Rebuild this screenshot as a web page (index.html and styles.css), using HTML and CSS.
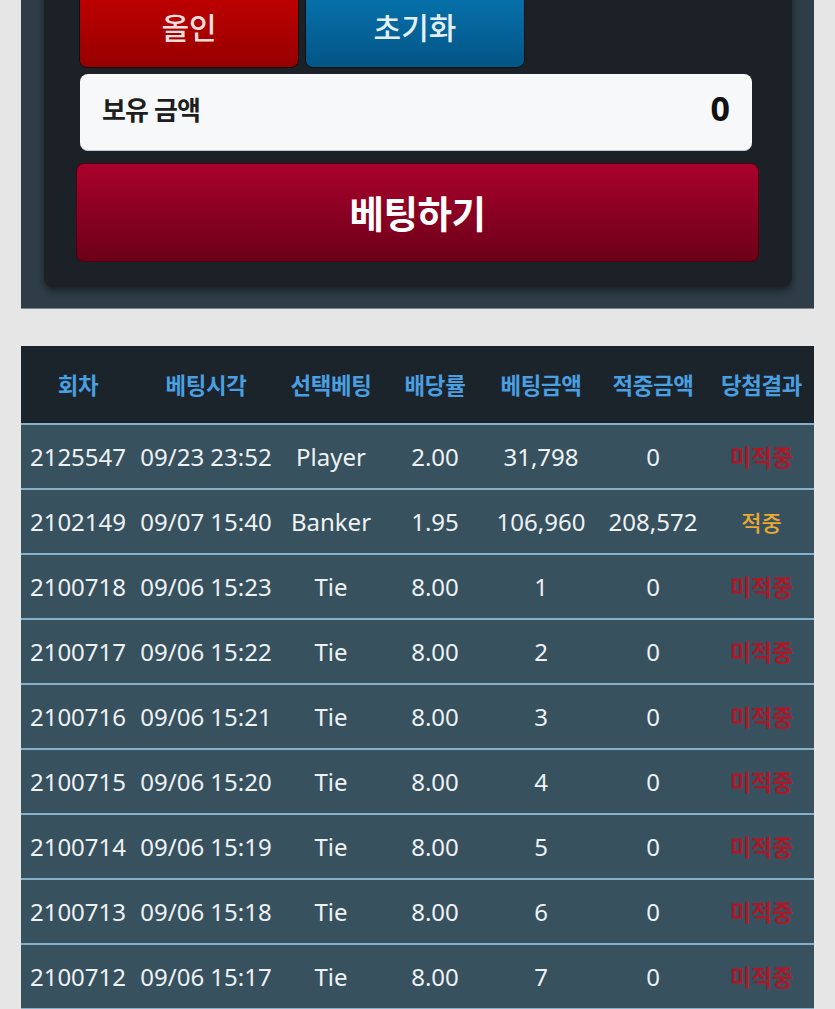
FILE: index.html
```html
<!DOCTYPE html>
<html lang="ko">
<head>
<meta charset="utf-8">
<title>베팅</title>
<link rel="stylesheet" href="styles.css">
</head>
<body>
<section class="panel">
  <div class="card">
    <div class="btn-row">
      <button class="chip chip-red">올인</button>
      <button class="chip chip-blue">초기화</button>
    </div>
    <div class="balance">
      <span class="balance-label">보유 금액</span>
      <span class="balance-value">0</span>
    </div>
    <button class="bet-btn">베팅하기</button>
  </div>
</section>

<table class="history">
  <colgroup>
    <col class="c1"><col class="c2"><col class="c3"><col class="c4"><col class="c5"><col class="c6"><col class="c7">
  </colgroup>
  <thead>
    <tr>
      <th>회차</th><th>베팅시각</th><th>선택베팅</th><th>배당률</th><th>베팅금액</th><th>적중금액</th><th>당첨결과</th>
    </tr>
  </thead>
  <tbody>
    <tr><td>2125547</td><td>09/23 23:52</td><td>Player</td><td>2.00</td><td>31,798</td><td>0</td><td class="lose">미적중</td></tr>
    <tr><td>2102149</td><td>09/07 15:40</td><td>Banker</td><td>1.95</td><td>106,960</td><td>208,572</td><td class="win">적중</td></tr>
    <tr><td>2100718</td><td>09/06 15:23</td><td>Tie</td><td>8.00</td><td>1</td><td>0</td><td class="lose">미적중</td></tr>
    <tr><td>2100717</td><td>09/06 15:22</td><td>Tie</td><td>8.00</td><td>2</td><td>0</td><td class="lose">미적중</td></tr>
    <tr><td>2100716</td><td>09/06 15:21</td><td>Tie</td><td>8.00</td><td>3</td><td>0</td><td class="lose">미적중</td></tr>
    <tr><td>2100715</td><td>09/06 15:20</td><td>Tie</td><td>8.00</td><td>4</td><td>0</td><td class="lose">미적중</td></tr>
    <tr><td>2100714</td><td>09/06 15:19</td><td>Tie</td><td>8.00</td><td>5</td><td>0</td><td class="lose">미적중</td></tr>
    <tr><td>2100713</td><td>09/06 15:18</td><td>Tie</td><td>8.00</td><td>6</td><td>0</td><td class="lose">미적중</td></tr>
    <tr><td>2100712</td><td>09/06 15:17</td><td>Tie</td><td>8.00</td><td>7</td><td>0</td><td class="lose">미적중</td></tr>
  </tbody>
</table>
</body>
</html>
```

FILE: styles.css
```css
* { box-sizing: border-box; }

body {
  margin: 0;
  background: #e6e6e6;
  font-family: "Noto Sans", "Noto Sans CJK KR", sans-serif;
  overflow: hidden;
}

.panel {
  margin: -34px 21px 0 21px;
  background: #2f3d47;
  padding: 0 22px 21px 23px;
  border-bottom: 1px solid #7f888e;
}

.card {
  background: #1b2126;
  border-radius: 0 0 9px 9px;
  padding: 20px 40px 25px 35px;
  box-shadow: 0 4px 7px rgba(0, 0, 0, 0.45);
}

.btn-row {
  display: flex;
  gap: 6px;
}

.chip {
  width: 220px;
  height: 82px;
  border: 1px solid #0d0f12;
  border-radius: 8px;
  font-family: "Noto Sans CJK KR", sans-serif;
  font-size: 30px;
  font-weight: 500;
  padding: 0 0 2px;
  cursor: pointer;
}

.chip-red {
  background: linear-gradient(#c40000, #960000);
  color: #f3dede;
}

.chip-blue {
  background: linear-gradient(#0775b0, #035586);
  color: #e4f0f8;
}

.balance {
  margin: 6px 0 0 1px;
  height: 77px;
  background: #f7f8f9;
  border-radius: 8px;
  border-bottom: 1px solid #b9c6d2;
  display: flex;
  align-items: center;
  justify-content: space-between;
  padding: 0 22px 8px 22px;
}

.balance-label {
  font-family: "Noto Sans CJK KR", sans-serif;
  font-size: 26px;
  font-weight: 700;
  color: #1e1e1e;
  letter-spacing: -1px;
}

.balance-value {
  font-family: "Noto Sans", sans-serif;
  font-size: 34px;
  font-weight: 700;
  color: #111;
}

.bet-btn {
  display: block;
  width: calc(100% + 10px);
  margin: 12px -6px 0 -3px;
  height: 99px;
  border: 1px solid #520010;
  border-radius: 8px;
  background: linear-gradient(#a9012b, #6c0019);
  color: #fff;
  font-family: "Noto Sans CJK KR", sans-serif;
  font-size: 37.5px;
  font-weight: 700;
  letter-spacing: -0.5px;
  padding: 0 0 2px;
  cursor: pointer;
}

.history {
  margin: 37px 21px 0 21px;
  width: 793px;
  border-collapse: collapse;
  table-layout: fixed;
}

.c1 { width: 114px; }
.c2 { width: 142px; }
.c3 { width: 108px; }
.c4 { width: 100px; }
.c5 { width: 112px; }
.c6 { width: 112px; }
.c7 { width: 105px; }

.history th {
  background: #1b232b;
  height: 78px;
  color: #4a9fe0;
  font-family: "Noto Sans CJK KR", sans-serif;
  font-size: 22.4px;
  font-weight: 700;
  text-align: center;
  vertical-align: middle;
  padding: 0 0 2px;
  white-space: nowrap;
  letter-spacing: -0.3px;
  border-bottom: 2px solid #86afc8;
}

.history td {
  background: #37515f;
  height: 65px;
  color: #eef2f4;
  font-size: 24px;
  text-align: center;
  vertical-align: middle;
  white-space: nowrap;
  padding: 0 0 1px;
  border-bottom: 2px solid #86afc8;
}

.history td.lose {
  color: #ab1828;
  font-family: "Noto Sans CJK KR", sans-serif;
  font-weight: 700;
  font-size: 22.8px;
}

.history td.win {
  color: #eaa935;
  font-family: "Noto Sans CJK KR", sans-serif;
  font-weight: 500;
  font-size: 22px;
}
```
